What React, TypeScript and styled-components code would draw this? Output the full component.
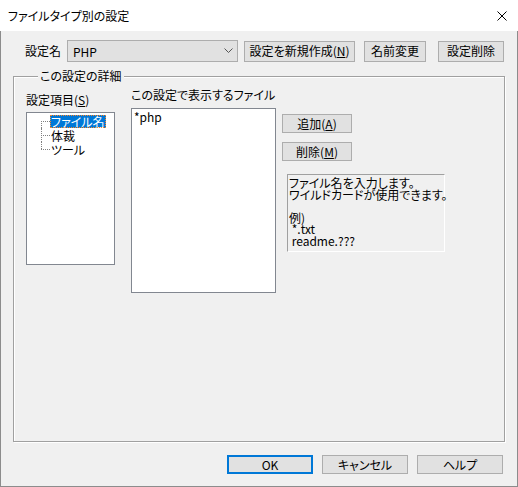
import styled, { createGlobalStyle } from "styled-components";

const GlobalStyle = createGlobalStyle`
  html, body {
    margin: 0;
    padding: 0;
    background: #ffffff;
  }
  body {
    font-family: "Noto Sans CJK JP", "Noto Sans", sans-serif;
    font-size: 12px;
    font-feature-settings: "palt" 1;
    color: #000000;
  }
`;

const Window = styled.div`
  width: 518px;
  height: 487px;
  display: flex;
  flex-direction: column;
`;

const TitleBar = styled.div`
  height: 31px;
  flex: none;
  display: flex;
  align-items: center;
  justify-content: space-between;
  padding: 0 11px 0 8px;
  background: #ffffff;
`;

const Title = styled.span`
  font-size: 12px;
  line-height: 14px;
`;

const Body = styled.div`
  flex: 1;
  min-height: 0;
  display: flex;
  flex-direction: column;
  background: #f0f0f0;
  border: 1px solid #8c8c8c;
  border-top: none;
`;

const TopRow = styled.div`
  display: flex;
  align-items: center;
  height: 22px;
  margin-top: 9px;
  padding-left: 24px;
`;

const FieldLabel = styled.span`
  margin-right: 6px;
  line-height: 14px;
`;

const Combo = styled.div`
  width: 171px;
  height: 22px;
  box-sizing: border-box;
  display: flex;
  align-items: center;
  justify-content: space-between;
  padding: 0 2px 0 5px;
  background: #e1e1e1;
  border: 1px solid #adadad;
`;

const Button = styled.button<{ $w: number; $h: number; $ml?: number; $mt?: number; $default?: boolean }>`
  width: ${p => p.$w}px;
  height: ${p => p.$h}px;
  margin-left: ${p => p.$ml || 0}px;
  margin-top: ${p => p.$mt || 0}px;
  box-sizing: border-box;
  flex: none;
  padding: 0;
  font: inherit;
  font-size: 12px;
  line-height: 14px;
  color: #000000;
  background: #e1e1e1;
  border: ${p => (p.$default ? "2px solid #0078d7" : "1px solid #adadad")};
  border-radius: 0;
`;

const Group = styled.fieldset`
  flex: 1;
  min-width: 0;
  min-height: 0;
  margin: 7px 12px 0 12px;
  padding: 0 12px;
  border: 1px solid #a0a0a0;
  box-shadow: inset 1px 1px 0 #ffffff, 1px 1px 0 #ffffff;
`;

const Legend = styled.legend`
  margin-left: 12px;
  padding: 0 2px;
  line-height: 14px;
  background: #f0f0f0;
`;

const Columns = styled.div`
  display: flex;
  align-items: flex-start;
`;

const Column = styled.div<{ $top: number; $ml?: number }>`
  display: flex;
  flex-direction: column;
  align-items: flex-start;
  padding-top: ${p => p.$top}px;
  margin-left: ${p => p.$ml || 0}px;
`;

const Caption = styled.span`
  line-height: 14px;
  white-space: nowrap;
`;

const TreeBox = styled.div`
  width: 89px;
  height: 153px;
  margin-top: 5px;
  box-sizing: border-box;
  padding: 1px 0 0 14px;
  background: #ffffff;
  border: 1px solid #828790;
`;

const TreeRow = styled.div`
  display: flex;
  height: 14px;
  align-items: center;
`;

const Connector = styled.span<{ $first?: boolean; $last?: boolean }>`
  position: relative;
  width: 9px;
  align-self: stretch;
  flex: none;

  &::before {
    content: "";
    position: absolute;
    left: 0;
    top: ${p => (p.$first ? "7px" : "0")};
    bottom: ${p => (p.$last ? "7px" : "0")};
    border-left: 1px dotted #808080;
  }

  &::after {
    content: "";
    position: absolute;
    left: 0;
    right: 0;
    top: 7px;
    border-top: 1px dotted #808080;
  }
`;

const TreeLabel = styled.span<{ $selected?: boolean }>`
  display: inline-block;
  height: 13px;
  font-size: 12px;
  line-height: 13px;
  padding: 0 1px;
  box-sizing: border-box;
  white-space: nowrap;
  background: ${p => (p.$selected ? "#0078d7" : "transparent")};
  color: ${p => (p.$selected ? "#ffffff" : "#000000")};
  outline: ${p => (p.$selected ? "1px dotted #ff8728" : "none")};
  outline-offset: -1px;
`;

const ListBox = styled.div`
  width: 145px;
  height: 185px;
  margin-top: 6px;
  box-sizing: border-box;
  padding: 1px 2px;
  line-height: 14px;
  background: #ffffff;
  border: 1px solid #828790;
`;

const HintBox = styled.div`
  width: 158px;
  height: 78px;
  margin: 13px 0 0 5px;
  box-sizing: border-box;
  padding: 2px 0 0 1px;
  line-height: 11.5px;
  white-space: pre;
  border-top: 1px solid #a0a0a0;
  border-left: 1px solid #a0a0a0;
  border-bottom: 1px solid #ffffff;
  border-right: 1px solid #ffffff;
`;

const Footer = styled.div`
  display: flex;
  justify-content: flex-end;
  gap: 9px;
  height: 19px;
  margin: 13px 14px 12px 0;
`;

const treeItems = ["ファイル名", "体裁", "ツール"];

const hint = "ファイル名を入力します。\nワイルドカードが使用できます。\n\n例)\n *.txt\n readme.???";

function App() {
  return (
    <>
      <GlobalStyle />
      <Window>
        <TitleBar>
          <Title>ファイルタイプ別の設定</Title>
          <svg width="10" height="10" viewBox="0 0 10 10">
            <path d="M0.5 0.5 L9.5 9.5 M9.5 0.5 L0.5 9.5" stroke="#000" strokeWidth="1" />
          </svg>
        </TitleBar>
        <Body>
          <TopRow>
            <FieldLabel>設定名</FieldLabel>
            <Combo>
              <span>PHP</span>
              <svg width="13" height="6" viewBox="0 0 13 6">
                <polyline points="2.5,0.5 6.5,4.5 10.5,0.5" fill="none" stroke="#555" strokeWidth="1" />
              </svg>
            </Combo>
            <Button $w={111} $h={21} $ml={6}>
              設定を新規作成(<u>N</u>)
            </Button>
            <Button $w={62} $h={21} $ml={9}>
              名前変更
            </Button>
            <Button $w={66} $h={21} $ml={12}>
              設定削除
            </Button>
          </TopRow>
          <Group>
            <Legend>この設定の詳細</Legend>
            <Columns>
              <Column $top={10}>
                <Caption>
                  設定項目(<u>S</u>)
                </Caption>
                <TreeBox>
                  {treeItems.map((item, i) => (
                    <TreeRow key={item}>
                      <Connector $first={i === 0} $last={i === treeItems.length - 1} />
                      <TreeLabel $selected={i === 0}>{item}</TreeLabel>
                    </TreeRow>
                  ))}
                </TreeBox>
              </Column>
              <Column $top={5} $ml={16}>
                <Caption>この設定で表示するファイル</Caption>
                <ListBox>*php</ListBox>
              </Column>
              <Column $top={31} $ml={6}>
                <Button $w={70} $h={19}>
                  追加(<u>A</u>)
                </Button>
                <Button $w={70} $h={19} $mt={9}>
                  削除(<u>M</u>)
                </Button>
                <HintBox>{hint}</HintBox>
              </Column>
            </Columns>
          </Group>
          <Footer>
            <Button $w={86} $h={19} $default>
              OK
            </Button>
            <Button $w={86} $h={19}>
              キャンセル
            </Button>
            <Button $w={86} $h={19}>
              ヘルプ
            </Button>
          </Footer>
        </Body>
      </Window>
    </>
  );
}

export default App;
